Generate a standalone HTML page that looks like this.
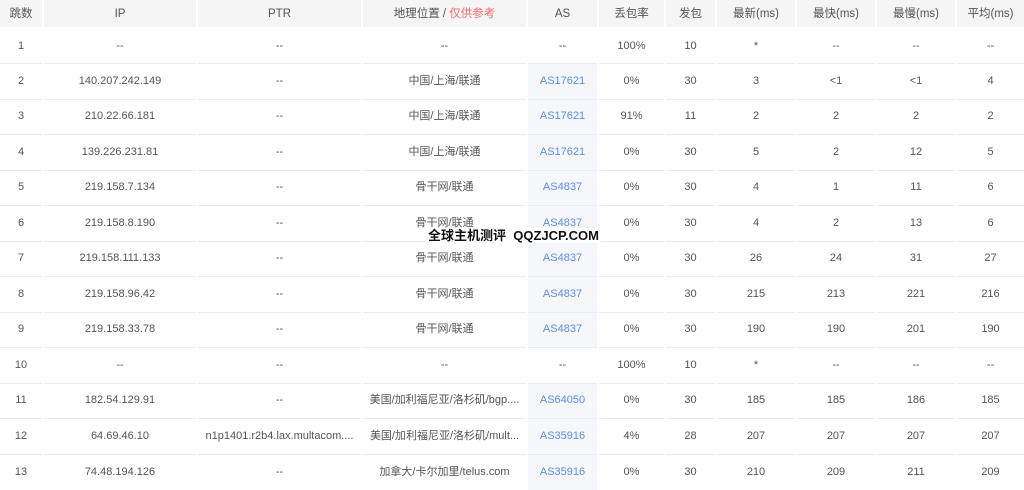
<!DOCTYPE html>
<html><head><meta charset="utf-8"><style>
*{margin:0;padding:0;box-sizing:border-box}
body{width:1024px;height:480px;overflow:hidden;background:#fff;font-family:"Liberation Sans","Noto Sans CJK SC",sans-serif;font-size:11px;color:#555}
table{border-collapse:collapse;table-layout:fixed;width:1024px;position:absolute;top:0;left:0}
th{height:28px;background:#f5f5f5;font-weight:normal;color:#555;font-size:11.5px;line-height:14px;border-left:2px solid #fff;border-bottom:2px solid #fff}
th:first-child{border-left:none}
td{height:35.5px;line-height:13px;text-align:center;border-top:1px solid #e9eef2;border-left:2px solid #fff;white-space:nowrap;overflow:hidden}
td:first-child{border-left:none}
td.as{background:#f5f7fa;color:#5b8def}
td.as.e{background:#fff;color:#555}
.r{color:#f56c6c}
.wm{position:absolute;left:426px;top:228px;font-weight:bold;font-size:13px;color:#111;background:#fff;line-height:15px;padding:0 2px}
</style></head><body>
<table>
<colgroup><col style="width:43px"><col style="width:154px"><col style="width:165px"><col style="width:165px"><col style="width:71px"><col style="width:67px"><col style="width:51px"><col style="width:80px"><col style="width:80px"><col style="width:80px"><col style="width:68px"></colgroup>
<tr><th>跳数</th><th>IP</th><th>PTR</th><th>地理位置 / <span class="r">仅供参考</span></th><th>AS</th><th>丢包率</th><th>发包</th><th>最新(ms)</th><th>最快(ms)</th><th>最慢(ms)</th><th>平均(ms)</th></tr>
<tr><td>1</td><td>--</td><td>--</td><td>--</td><td class="as e">--</td><td>100%</td><td>10</td><td>*</td><td>--</td><td>--</td><td>--</td></tr>
<tr><td>2</td><td>140.207.242.149</td><td>--</td><td>中国/上海/联通</td><td class="as">AS17621</td><td>0%</td><td>30</td><td>3</td><td>&lt;1</td><td>&lt;1</td><td>4</td></tr>
<tr><td>3</td><td>210.22.66.181</td><td>--</td><td>中国/上海/联通</td><td class="as">AS17621</td><td>91%</td><td>11</td><td>2</td><td>2</td><td>2</td><td>2</td></tr>
<tr><td>4</td><td>139.226.231.81</td><td>--</td><td>中国/上海/联通</td><td class="as">AS17621</td><td>0%</td><td>30</td><td>5</td><td>2</td><td>12</td><td>5</td></tr>
<tr><td>5</td><td>219.158.7.134</td><td>--</td><td>骨干网/联通</td><td class="as">AS4837</td><td>0%</td><td>30</td><td>4</td><td>1</td><td>11</td><td>6</td></tr>
<tr><td>6</td><td>219.158.8.190</td><td>--</td><td>骨干网/联通</td><td class="as">AS4837</td><td>0%</td><td>30</td><td>4</td><td>2</td><td>13</td><td>6</td></tr>
<tr><td>7</td><td>219.158.111.133</td><td>--</td><td>骨干网/联通</td><td class="as">AS4837</td><td>0%</td><td>30</td><td>26</td><td>24</td><td>31</td><td>27</td></tr>
<tr><td>8</td><td>219.158.96.42</td><td>--</td><td>骨干网/联通</td><td class="as">AS4837</td><td>0%</td><td>30</td><td>215</td><td>213</td><td>221</td><td>216</td></tr>
<tr><td>9</td><td>219.158.33.78</td><td>--</td><td>骨干网/联通</td><td class="as">AS4837</td><td>0%</td><td>30</td><td>190</td><td>190</td><td>201</td><td>190</td></tr>
<tr><td>10</td><td>--</td><td>--</td><td>--</td><td class="as e">--</td><td>100%</td><td>10</td><td>*</td><td>--</td><td>--</td><td>--</td></tr>
<tr><td>11</td><td>182.54.129.91</td><td>--</td><td>美国/加利福尼亚/洛杉矶/bgp....</td><td class="as">AS64050</td><td>0%</td><td>30</td><td>185</td><td>185</td><td>186</td><td>185</td></tr>
<tr><td>12</td><td>64.69.46.10</td><td>n1p1401.r2b4.lax.multacom....</td><td>美国/加利福尼亚/洛杉矶/mult...</td><td class="as">AS35916</td><td>4%</td><td>28</td><td>207</td><td>207</td><td>207</td><td>207</td></tr>
<tr><td>13</td><td>74.48.194.126</td><td>--</td><td>加拿大/卡尔加里/telus.com</td><td class="as">AS35916</td><td>0%</td><td>30</td><td>210</td><td>209</td><td>211</td><td>209</td></tr>
</table>
<div class="wm">全球主机测评&nbsp; QQZJCP.COM</div>
</body></html>
